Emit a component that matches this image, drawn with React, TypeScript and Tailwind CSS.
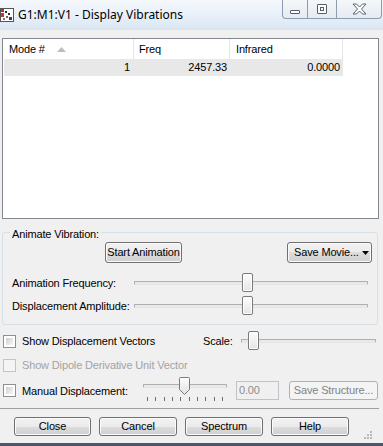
import React from "react";

const Btn = ({ children, className }: { children: React.ReactNode; className: string }) => (
  <div
    className={
      "flex items-center justify-center rounded-[3px] border border-[#707070] bg-[linear-gradient(#f2f2f2_0%,#ebebeb_50%,#dddddd_50%,#cfcfcf_100%)] text-black shadow-[inset_0_0_0_1px_#fbfbfb] " +
      className
    }
  >
    {children}
  </div>
);

const Thumb = ({ left, top }: { left: number; top: number }) => (
  <div
    className="absolute h-[19px] w-[11px] rounded-[2px] border border-[#7a7a7a] bg-[linear-gradient(#fdfdfd,#e4e4e4)] shadow-[inset_0_0_0_1px_#ffffff]"
    style={{ left, top }}
  />
);

const Track = () => (
  <div className="h-[4px] w-full rounded-[1px] border border-[#b0b0b0] border-b-[#e6e6e6] bg-[#e7eaea]" />
);

const Check = ({ disabled }: { disabled?: boolean }) =>
  disabled ? (
    <div className="h-[13px] w-[13px] border border-[#c4c4c4] bg-[#f4f4f4]" />
  ) : (
    <div className="h-[13px] w-[13px] border border-[#8e8f8f] bg-white p-[2px]">
      <div className="h-full w-full bg-[linear-gradient(135deg,#cbcfd5,#f6f6f6)]" />
    </div>
  );

export default function App() {
  return (
    <div
      className="relative flex h-[446px] w-[383px] flex-col overflow-hidden bg-[#f0f0f0] text-[11px] tracking-[-0.15px] text-black"
      style={{ fontFamily: '"Liberation Sans", Arial, sans-serif' }}
    >
      {/* Title bar */}
      <div className="flex h-[30px] items-start bg-[linear-gradient(#f4f8fc,#e6eff8_60%,#d9e5f1)] tracking-normal">
        <svg width="14" height="14" viewBox="0 0 14 14" className="ml-0 mt-[8px]">
          <rect x="0.5" y="0.5" width="13" height="13" fill="#fff" stroke="#555" />
          <rect x="1" y="1" width="3" height="3" fill="#d22" />
          <rect x="1" y="5" width="3" height="4" fill="#c33" />
          <rect x="5" y="3" width="2" height="2" fill="#333" />
          <rect x="8" y="5" width="2" height="2" fill="#333" />
          <rect x="6" y="8" width="2" height="2" fill="#666" />
          <rect x="9" y="9" width="3" height="3" fill="#444" />
          <rect x="3" y="10" width="2" height="2" fill="#777" />
        </svg>
        <div
          className="ml-[4px] mt-[7px] text-[12px] leading-[15px] text-black"
          style={{ fontFamily: '"Noto Sans", "Open Sans", sans-serif' }}
        >
          G1:M1:V1 - Display Vibrations
        </div>
        <div className="ml-auto mr-[1px] flex h-[19px] overflow-hidden rounded-b-[4px] border border-t-0 border-[#8d9cae] bg-[linear-gradient(#f5f8fb,#e4ebf2)]">
          <div className="flex w-[25px] items-end justify-center border-r border-[#8d9cae] pb-[4px]">
            <div className="h-[4px] w-[10px] rounded-[1px] border border-[#555d68] bg-white" />
          </div>
          <div className="flex w-[29px] items-center justify-center border-r border-[#8d9cae]">
            <div className="h-[10px] w-[10px] rounded-[1px] border border-[#555d68] bg-white p-[2px]">
              <div className="h-full w-full border border-[#555d68]" />
            </div>
          </div>
          <div className="flex w-[44px] items-center justify-center">
            <svg width="15" height="12" viewBox="0 0 15 12">
              <path
                d="M1 1 H4.5 L7.5 4 L10.5 1 H14 L9.5 6 L14 11 H10.5 L7.5 8 L4.5 11 H1 L5.5 6 Z"
                fill="#fff"
                stroke="#5b6470"
                strokeWidth="1"
                strokeLinejoin="round"
              />
            </svg>
          </div>
        </div>
      </div>

      {/* Body */}
      <div className="flex flex-col pl-[2px] pr-[5px] pt-[8px]">
        {/* List view */}
        <div className="h-[181px] w-[377px] border border-[#828790] bg-white">
          <div className="flex h-[20px] items-center pl-[1px]">
            <div className="flex h-full w-[130px] items-center border-r border-[#e5e5e5] pl-[5px]">
              Mode #
              <svg width="9" height="5" viewBox="0 0 9 5" className="ml-[12px]">
                <path d="M0 5 L4.5 0 L9 5 Z" fill="#b9bdc4" />
              </svg>
            </div>
            <div className="flex h-full w-[96px] items-center border-r border-[#e5e5e5] pl-[5px]">Freq</div>
            <div className="flex h-full w-[113px] items-center border-r border-[#e5e5e5] pl-[6px]">Infrared</div>
            <div className="h-full flex-1" />
          </div>
          <div className="ml-[1px] flex h-[17px] w-[339px] items-center bg-[#e8e8e8]">
            <div className="w-[130px] pr-[4px] text-right">1</div>
            <div className="w-[96px] pr-[3px] text-right">2457.33</div>
            <div className="w-[113px] pr-[3px] text-right">0.0000</div>
          </div>
        </div>

        {/* Group box */}
        <div className="relative mt-[13px] h-[93px] w-[376px] rounded-[3px] border border-[#d5dfe5]">
          <div className="absolute left-[7px] top-[-6px] bg-[#f0f0f0] px-[2px] leading-[14px]">Animate Vibration:</div>
          <div className="mt-[9px] flex h-[21px]">
            <Btn className="ml-[102px] w-[77px]">Start Animation</Btn>
            <Btn className="ml-[105px] w-[85px] justify-start pl-[6px]">
              Save Movie...
              <svg width="7" height="4" viewBox="0 0 7 4" className="ml-[3px]">
                <path d="M0 0 H7 L3.5 4 Z" fill="#000" />
              </svg>
            </Btn>
          </div>
          <div className="mt-[9px] flex h-[22px] items-center">
            <div className="ml-[9px] w-[122px]">Animation Frequency:</div>
            <div className="relative w-[234px]">
              <Track />
              <Thumb left={108} top={-8} />
            </div>
          </div>
          <div className="mt-[1px] flex h-[22px] items-center">
            <div className="ml-[9px] w-[122px]">Displacement Amplitude:</div>
            <div className="relative w-[234px]">
              <Track />
              <Thumb left={108} top={-8} />
            </div>
          </div>
        </div>

        {/* Show displacement vectors */}
        <div className="mt-[6px] flex h-[20px] items-center">
          <div className="ml-[1px]">
            <Check />
          </div>
          <div className="ml-[6px] w-[181px]">Show Displacement Vectors</div>
          <div className="w-[38px]">Scale:</div>
          <div className="relative w-[135px]">
            <Track />
            <Thumb left={7} top={-8} />
          </div>
        </div>

        {/* Dipole */}
        <div className="mt-[4px] flex h-[20px] items-center">
          <div className="ml-[1px]">
            <Check disabled />
          </div>
          <div className="ml-[6px] text-[#a3a3a3]">Show Dipole Derivative Unit Vector</div>
        </div>

        {/* Manual displacement */}
        <div className="mt-[6px] flex h-[22px] items-start">
          <div className="ml-[1px] mt-[3px]">
            <Check />
          </div>
          <div className="ml-[6px] mt-[3px] w-[121px] leading-[14px]">Manual Displacement:</div>
          <div className="relative mt-[3px] flex w-[84px] flex-col">
            <Track />
            <div className="mt-[9px] flex justify-between px-[4px]">
              {Array.from({ length: 10 }).map((_, i) => (
                <div key={i} className="h-[4px] w-[1px] bg-[#6d6d6d]" />
              ))}
            </div>
            <svg width="11" height="18" viewBox="0 0 11 18" className="absolute left-[36px] top-[-7px]">
              <defs>
                <linearGradient id="tg" x1="0" y1="0" x2="0" y2="1">
                  <stop offset="0" stopColor="#fdfdfd" />
                  <stop offset="1" stopColor="#e2e2e2" />
                </linearGradient>
              </defs>
              <path d="M1.5 0.5 H9.5 Q10.5 0.5 10.5 1.5 V12.5 L5.5 17.5 L0.5 12.5 V1.5 Q0.5 0.5 1.5 0.5 Z" fill="url(#tg)" stroke="#7a7a7a" />
            </svg>
          </div>
          <div className="ml-[9px] flex h-[19px] w-[43px] items-center border border-[#bfc4ca] bg-[#f0f0f0] pl-[2px] text-[#8d8d8d]">
            0.00
          </div>
          <div className="ml-[10px] flex h-[19px] w-[89px] items-center justify-center rounded-[3px] border border-[#adb2b5] bg-[#f4f4f4] text-[#838383]">
            Save Structure...
          </div>
        </div>

        {/* Separator */}
        <div className="ml-[-2px] mt-[5px] h-[1px] w-[379px] bg-[#a0a0a0]" />

        {/* Bottom buttons */}
        <div className="mt-[8px] flex h-[19px] gap-[8px] pl-[12px]">
          <Btn className="w-[77px]">Close</Btn>
          <Btn className="w-[78px]">Cancel</Btn>
          <Btn className="w-[78px]">Spectrum</Btn>
          <Btn className="w-[78px]">Help</Btn>
        </div>
      </div>

      {/* Size grip */}
      <svg width="10" height="10" viewBox="0 0 10 10" className="absolute bottom-[6px] right-[10px]">
        <rect x="7" y="7" width="2" height="2" fill="#b8b8b8" />
        <rect x="4" y="7" width="2" height="2" fill="#b8b8b8" />
        <rect x="7" y="4" width="2" height="2" fill="#b8b8b8" />
        <rect x="1" y="7" width="2" height="2" fill="#b8b8b8" />
        <rect x="4" y="4" width="2" height="2" fill="#b8b8b8" />
        <rect x="7" y="1" width="2" height="2" fill="#b8b8b8" />
      </svg>

      <div className="mt-auto h-[3px] w-full bg-[#4a5868]" />
    </div>
  );
}
